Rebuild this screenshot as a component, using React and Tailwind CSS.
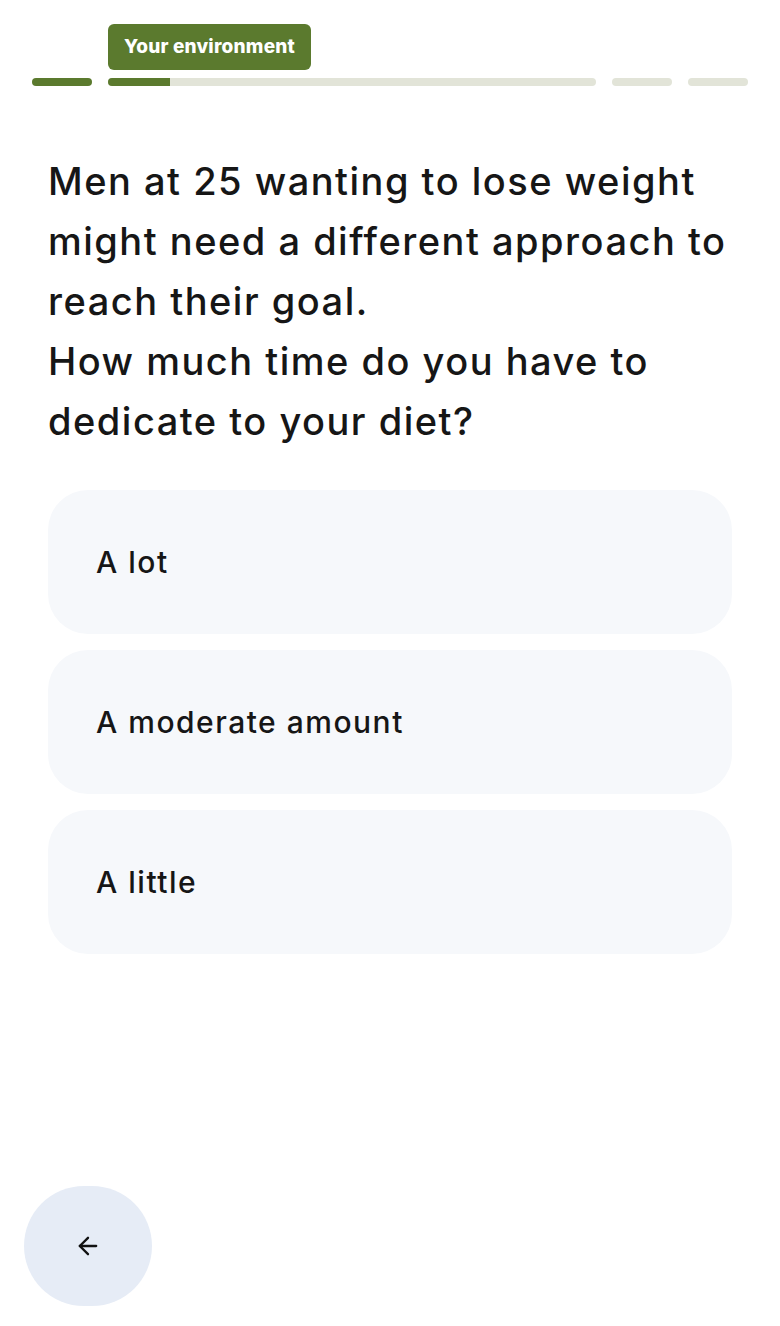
import React from 'react';

const options = ['A lot', 'A moderate amount', 'A little'];

export default function App() {
    return (
        <div className="min-h-screen flex flex-col bg-white text-[#161616]" style={{ fontFamily: "Inter, 'Open Sans', sans-serif" }}>
            <div className="px-[32px] pt-[24px]">
                <div className="flex gap-4 items-end">
                    <div className="w-[60px] flex flex-col">
                        <div className="h-[8px] rounded-full bg-[#5b7a2e]" />
                    </div>
                    <div className="flex-1 flex flex-col items-start">
                        <div className="h-[46px] w-[203px] justify-center rounded-md bg-[#5b7a2e] text-white font-extrabold text-[19px] tracking-[0.2px] flex items-center mb-[8px]">
                            Your environment
                        </div>
                        <div className="h-[8px] w-full rounded-full bg-[#e2e4d8] overflow-hidden">
                            <div className="h-full w-[62px] bg-[#5b7a2e]" />
                        </div>
                    </div>
                    <div className="w-[60px] h-[8px] rounded-full bg-[#e2e4d8]" />
                    <div className="w-[60px] h-[8px] rounded-full bg-[#e2e4d8]" />
                </div>
            </div>

            <div className="px-[48px] pt-[65px]">
                <h1 className="text-[38px] leading-[60px] font-medium tracking-[1.5px] whitespace-nowrap">
                    Men at 25 wanting to lose weight
                    <br />
                    might need a different approach to
                    <br />
                    reach their goal.
                    <br />
                    How much time do you have to
                    <br />
                    dedicate to your diet?
                </h1>

                <div className="mt-[39px] flex flex-col gap-4">
                    {options.map((o) => (
                        <button key={o} className="h-[144px] w-full rounded-[40px] bg-[#f6f8fb] px-[48px] flex items-center text-left text-[30px] font-medium tracking-[1.5px]">
                            {o}
                        </button>
                    ))}
                </div>
            </div>

            <div className="mt-auto px-[24px] pb-[20px] pt-8">
                <button className="w-[128px] h-[120px] rounded-full bg-[#e6ecf6] flex items-center justify-center">
                    <svg width="28" height="28" viewBox="0 0 24 24" fill="none" stroke="#111" strokeWidth="2" strokeLinecap="round" strokeLinejoin="round">
                        <path d="M19 12H5" />
                        <path d="M12 19l-7-7 7-7" />
                    </svg>
                </button>
            </div>
        </div>
    );
}
